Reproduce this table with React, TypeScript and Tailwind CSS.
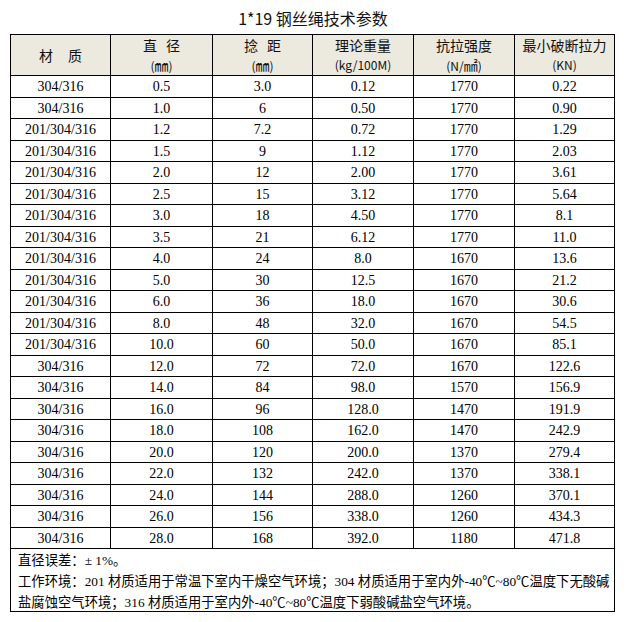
const rows: string[][] = [
  ['304/316', '0.5', '3.0', '0.12', '1770', '0.22'],
  ['304/316', '1.0', '6', '0.50', '1770', '0.90'],
  ['201/304/316', '1.2', '7.2', '0.72', '1770', '1.29'],
  ['201/304/316', '1.5', '9', '1.12', '1770', '2.03'],
  ['201/304/316', '2.0', '12', '2.00', '1770', '3.61'],
  ['201/304/316', '2.5', '15', '3.12', '1770', '5.64'],
  ['201/304/316', '3.0', '18', '4.50', '1770', '8.1'],
  ['201/304/316', '3.5', '21', '6.12', '1770', '11.0'],
  ['201/304/316', '4.0', '24', '8.0', '1670', '13.6'],
  ['201/304/316', '5.0', '30', '12.5', '1670', '21.2'],
  ['201/304/316', '6.0', '36', '18.0', '1670', '30.6'],
  ['201/304/316', '8.0', '48', '32.0', '1670', '54.5'],
  ['201/304/316', '10.0', '60', '50.0', '1670', '85.1'],
  ['304/316', '12.0', '72', '72.0', '1670', '122.6'],
  ['304/316', '14.0', '84', '98.0', '1570', '156.9'],
  ['304/316', '16.0', '96', '128.0', '1470', '191.9'],
  ['304/316', '18.0', '108', '162.0', '1470', '242.9'],
  ['304/316', '20.0', '120', '200.0', '1370', '279.4'],
  ['304/316', '22.0', '132', '242.0', '1370', '338.1'],
  ['304/316', '24.0', '144', '288.0', '1260', '370.1'],
  ['304/316', '26.0', '156', '338.0', '1260', '434.3'],
  ['304/316', '28.0', '168', '392.0', '1180', '471.8'],
];

const cjk = "font-['Noto_Sans_CJK_SC',sans-serif]";
const mixed = "font-['Liberation_Serif','Noto_Sans_CJK_SC',serif]";

const HeaderCell = ({ children, unit }: { children: React.ReactNode; unit?: React.ReactNode }) => (
  <div className="h-[41px] border-r border-b border-black bg-[#ECE9DF] flex flex-col items-center justify-center text-[#111]">
    <div className="flex items-center text-[14px] leading-[20px]">{children}</div>
    {unit && <div className="text-[12px] leading-[20px]">{unit}</div>}
  </div>
);

export default function App() {
  return (
    <div className="w-[626px] h-[622px] bg-white text-black">
      <div className={`h-[34px] flex items-center justify-center pt-[2px] text-[16px] text-[#111] ${cjk}`}>
        1*19 钢丝绳技术参数
      </div>
      <div className="ml-[10px] w-[605px] border-l border-t border-black">
        <div className={`grid grid-cols-[100px_102px_100px_101px_101px_100px] ${cjk}`}>
          <HeaderCell>
            <span>材</span>
            <span className="ml-[15px]">质</span>
          </HeaderCell>
          <HeaderCell unit={<>(<span className="text-[14px]">㎜</span>)</>}>
            <span>直</span>
            <span className="ml-[9px]">径</span>
          </HeaderCell>
          <HeaderCell unit={<>(<span className="text-[14px]">㎜</span>)</>}>
            <span>捻</span>
            <span className="ml-[9px]">距</span>
          </HeaderCell>
          <HeaderCell unit="(kg/100M)">理论重量</HeaderCell>
          <HeaderCell unit={<>(N/<span className="text-[14px]">㎟</span>)</>}>抗拉强度</HeaderCell>
          <HeaderCell unit="(KN)">最小破断拉力</HeaderCell>
        </div>
        <div className="grid grid-cols-[100px_102px_100px_101px_101px_100px] font-['Liberation_Serif',serif] text-[14px]">
          {rows.map((r, i) =>
            r.map((v, j) => (
              <div
                key={`${i}-${j}`}
                className={`${i % 2 === 0 ? 'h-[22px]' : 'h-[21px]'} border-r border-b border-black flex items-center justify-center`}
              >
                {v}
              </div>
            ))
          )}
        </div>
        <div className={`h-[63px] border-r border-b border-black pl-[7px] pt-[1px] text-[13.33px] leading-[21px] whitespace-nowrap ${mixed}`}>
          <div>直径误差：± 1%。</div>
          <div>工作环境：201 材质适用于常温下室内干燥空气环境；304 材质适用于室内外-40℃~80℃温度下无酸碱</div>
          <div>盐腐蚀空气环境；316 材质适用于室内外-40℃~80℃温度下弱酸碱盐空气环境。</div>
        </div>
      </div>
    </div>
  );
}
